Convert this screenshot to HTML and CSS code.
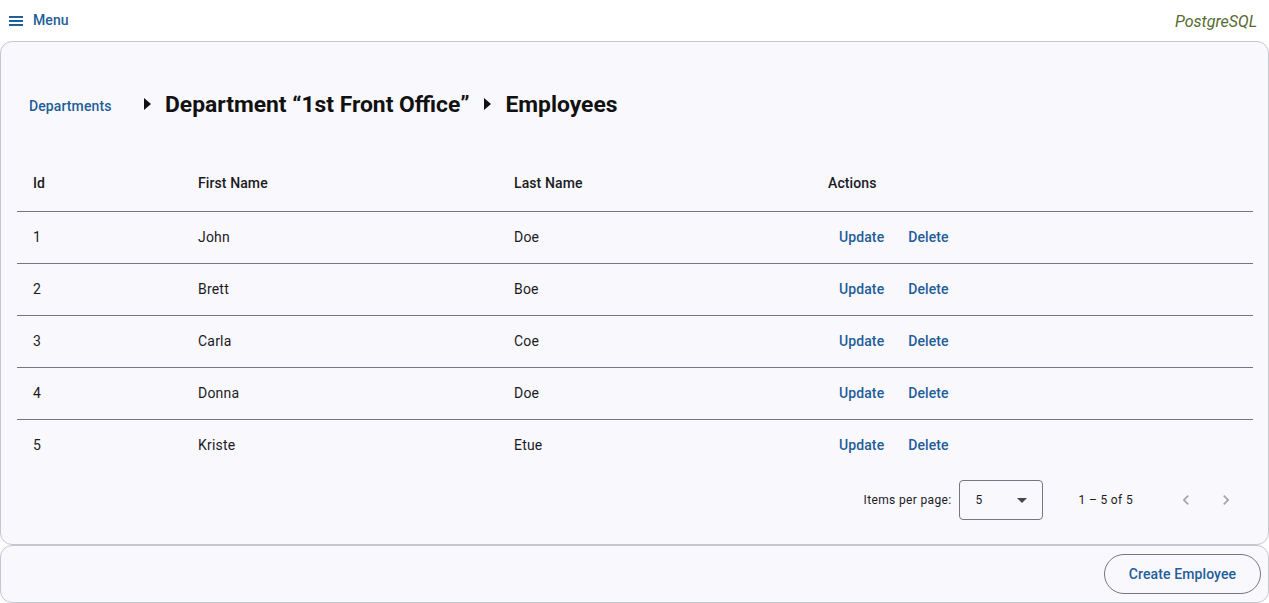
FILE: index.html
```html
<!DOCTYPE html>
<html>
<head>
<meta charset="utf-8">
<link rel="stylesheet" href="styles.css">
</head>
<body>
<header class="topbar">
  <button class="menu-btn">
    <svg width="14" height="10" viewBox="0 0 14 10"><rect x="0" y="0" width="14" height="2" fill="currentColor"/><rect x="0" y="4" width="14" height="2" fill="currentColor"/><rect x="0" y="8" width="14" height="2" fill="currentColor"/></svg>
    <span>Menu</span>
  </button>
  <span class="db">PostgreSQL</span>
</header>
<main class="card main-card">
  <nav class="crumbs">
    <a class="crumb-link">Departments</a>
    <span class="arrow first"><svg width="8" height="12" viewBox="0 0 8 12"><path d="M0 0l7 6-7 6z" fill="currentColor"/></svg></span>
    <span class="crumb-title">Department “1st Front Office”</span>
    <span class="arrow"><svg width="8" height="12" viewBox="0 0 8 12"><path d="M0 0l7 6-7 6z" fill="currentColor"/></svg></span>
    <span class="crumb-title">Employees</span>
  </nav>
  <table class="table">
    <thead>
      <tr><th class="c-id">Id</th><th class="c-first">First Name</th><th class="c-last">Last Name</th><th class="c-act">Actions</th></tr>
    </thead>
    <tbody>
      <tr><td>1</td><td>John</td><td>Doe</td><td><span class="tbtn">Update</span><span class="tbtn">Delete</span></td></tr>
      <tr><td>2</td><td>Brett</td><td>Boe</td><td><span class="tbtn">Update</span><span class="tbtn">Delete</span></td></tr>
      <tr><td>3</td><td>Carla</td><td>Coe</td><td><span class="tbtn">Update</span><span class="tbtn">Delete</span></td></tr>
      <tr><td>4</td><td>Donna</td><td>Doe</td><td><span class="tbtn">Update</span><span class="tbtn">Delete</span></td></tr>
      <tr><td>5</td><td>Kriste</td><td>Etue</td><td><span class="tbtn">Update</span><span class="tbtn">Delete</span></td></tr>
    </tbody>
  </table>
  <div class="paginator">
    <span class="ipp">Items per page:</span>
    <div class="select"><span>5</span><svg width="10" height="5" viewBox="0 0 10 5"><path d="M0 0l5 5 5-5z" fill="currentColor"/></svg></div>
    <span class="range">1 – 5 of 5</span>
    <span class="pbtn"><svg width="24" height="24" viewBox="0 0 24 24"><path d="M15.41 7.41L14 6l-6 6 6 6 1.41-1.41L10.83 12z" fill="currentColor"/></svg></span>
    <span class="pbtn"><svg width="24" height="24" viewBox="0 0 24 24"><path d="M10 6L8.59 7.41 13.17 12l-4.58 4.59L10 18l6-6z" fill="currentColor"/></svg></span>
  </div>
</main>
<footer class="card foot-card">
  <button class="create">Create Employee</button>
</footer>
</body>
</html>
```

FILE: styles.css
```css
* { box-sizing: border-box; }
html, body { margin: 0; padding: 0; }
body {
  font-family: Roboto, "Noto Sans", sans-serif;
  background: #ffffff;
  color: #1a1b1f;
  width: 1269px;
}
.topbar {
  height: 41px;
  display: flex;
  align-items: center;
  justify-content: space-between;
  padding: 0 12px 0 9px;
}
.menu-btn {
  display: flex;
  align-items: center;
  gap: 10px;
  border: none;
  background: none;
  padding: 0;
  font-family: inherit;
  font-size: 14px;
  font-weight: 500;
  letter-spacing: 0.1px;
  color: #1f5e99;
  margin-top: -1px;
}
.menu-btn svg { display: block; margin-top: 1px; }
.db {
  font-style: italic;
  font-size: 16px;
  color: #556b2f;
  margin-top: 2px;
}
.card {
  border: 1px solid #c6c6cf;
  border-radius: 12px;
  background: #f9f8fd;
}
.main-card {
  height: 504px;
  padding: 42px 14px 0 16px;
}
.crumbs {
  display: flex;
  align-items: center;
  height: 40px;
}
.crumb-link {
  padding: 0 12px;
  font-size: 14px;
  font-weight: 500;
  letter-spacing: 0.1px;
  color: #1f5e99;
  width: 127px;
  margin-top: 3px;
}
.arrow {
  width: 8px;
  height: 12px;
  color: #111;
  margin: 0 13px 0 15px;
}
.arrow.first { margin-left: 0; }
.arrow svg { display: block; }
.crumb-title {
  font-size: 22.85px;
  font-weight: 700;
  color: #111;
}
.table {
  margin-top: 31px;
  width: 1236px;
  border-collapse: collapse;
  table-layout: fixed;
}
.c-id { width: 164px; }
.c-first { width: 316px; }
.c-last { width: 314px; }
.c-act { width: 442px; }
th {
  height: 56px;
  text-align: left;
  font-size: 14px;
  font-weight: 500;
  letter-spacing: 0.1px;
  padding: 0 16px 0 17px;
  border-bottom: 1px solid #74777f;
  color: #1a1b1f;
}
th.c-id { padding-left: 16px; }
td {
  height: 52px;
  padding: 0 16px 0 17px;
  font-size: 14px;
  letter-spacing: 0.2px;
  color: #1a1b1f;
  border-bottom: 1px solid #74777f;
}
td:first-child { padding-left: 16px; }
tbody tr:last-child td { border-bottom: none; height: 51px; }
td:last-child { padding-left: 28px; }
.tbtn {
  display: inline-block;
  font-weight: 500;
  letter-spacing: 0.1px;
  color: #1f5e99;
  margin-right: 24px;
}
.paginator {
  height: 58px;
  padding-top: 2px;
  display: flex;
  align-items: center;
  justify-content: flex-end;
  padding-right: 8px;
  font-size: 12px;
  letter-spacing: 0.35px;
  color: #1a1b1f;
}
.ipp { margin-right: 8px; }
.select {
  width: 84px;
  height: 40px;
  border: 1px solid #74777f;
  border-radius: 4px;
  display: flex;
  align-items: center;
  justify-content: space-between;
  padding: 0 15px 0 15px;
  color: #1a1b1f;
}
.select svg { display: block; color: #44474e; }
.range { margin: 0 33px 0 35px; }
.pbtn {
  width: 40px;
  height: 40px;
  display: flex;
  align-items: center;
  justify-content: center;
  color: #a3a3a9;
}
.pbtn svg { width: 20px; height: 20px; }
.foot-card {
  height: 58px;
  display: flex;
  align-items: center;
  justify-content: flex-end;
  padding: 0 7px;
}
.create {
  height: 40px;
  width: 157px;
  border: 1px solid #74777f;
  border-radius: 20px;
  background: transparent;
  font-family: inherit;
  font-size: 14px;
  font-weight: 500;
  letter-spacing: 0.1px;
  color: #1f5e99;
}
```
